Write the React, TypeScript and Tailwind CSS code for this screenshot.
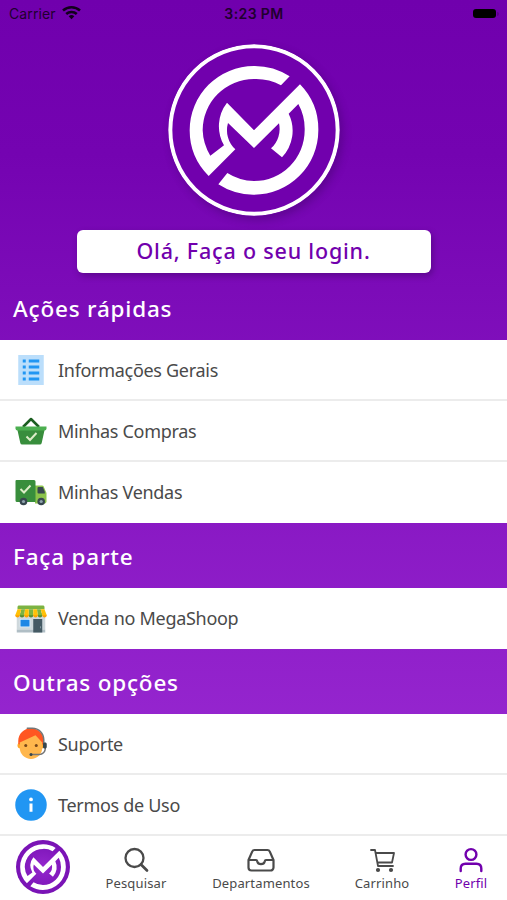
import type { ReactNode } from 'react';
import { FcAssistant, FcInfo, FcShop, FcViewDetails } from 'react-icons/fc';

const LOGO_PATH =
  'M404 124A193 193 0 0 0 297 93A193 193 0 0 0 104 286A193 193 0 0 0 161 423L241 343A78 78 0 0 1 219 264L297 339L372 265A78 78 0 0 1 348 340L381 367A116 116 0 0 0 401 236L430 207A154 154 0 0 1 449 286A152 152 0 0 1 297 438A154 154 0 0 1 217 414L190 448A193 193 0 0 0 297 479A193 193 0 0 0 490 286A193 193 0 0 0 435 148L297 286L216 203A115 115 0 0 0 207 331L166 362A154 154 0 0 1 143 286A154 154 0 0 1 297 132A154 154 0 0 1 378 151Z';

function Logo() {
  return (
    <svg className="w-[172px] h-[172px] rounded-full shadow-[3px_4px_8px_rgba(40,0,70,0.3)]" viewBox="39 27 516 516">
      <circle cx="297" cy="285" r="251" fill="#7100ad" stroke="#fff" strokeWidth="12" />
      <path d={LOGO_PATH} fill="#fff" />
    </svg>
  );
}

function TabLogo() {
  return (
    <svg className="w-[54px] h-[54px]" viewBox="69 57 456 456">
      <defs>
        <radialGradient id="tab-logo">
          <stop offset="0" stopColor="#9527ce" />
          <stop offset="1" stopColor="#7812b4" />
        </radialGradient>
      </defs>
      <circle cx="297" cy="285" r="228" fill="url(#tab-logo)" />
      <path d={LOGO_PATH} fill="#fff" />
    </svg>
  );
}

function BasketIcon() {
  return (
    <svg className="w-8 h-8" viewBox="0 0 32 32">
      <path d="M8 12 16 4l8 8" fill="none" stroke="#1b5e20" strokeWidth="2.5" strokeLinejoin="round" />
      <path d="M2 13h28l-3.3 15a2 2 0 0 1-2 1.6H7.3a2 2 0 0 1-2-1.6Z" fill="#388e3c" />
      <path d="M.5 11.500h31v2a2 2 0 0 1-2 2h-27a2 2 0 0 1-2-2Z" fill="#4caf50" />
      <path d="m11.5 21.5 3.5 3.5 6.5-7" fill="none" stroke="#dcedc8" strokeWidth="2" />
    </svg>
  );
}

function TruckIcon() {
  return (
    <svg className="w-8 h-8" viewBox="0 0 32 32">
      <path d="M20 8.500h7a2 2 0 0 1 1.800 1.200L31.500 16v8.500a2 2 0 0 1-2 2H20Z" fill="#8bc34a" />
      <path d="M1.500 3H19a1.500 1.500 0 0 1 1.500 1.500V25H2A1.500 1.500 0 0 1 .5 23.500V4a1 1 0 0 1 1-1Z" fill="#388e3c" />
      <path d="M23.500 10h4.300l2 4.700v1.800h-6.300a1 1 0 0 1-1-1V11a1 1 0 0 1 1-1Z" fill="#37474f" />
      <path d="m5.500 12 3.500 3.500L15.500 8.500" fill="none" stroke="#dcedc8" strokeWidth="2" />
      <circle cx="8.500" cy="24.500" r="3.800" fill="#37474f" />
      <circle cx="26.200" cy="24.500" r="3.800" fill="#37474f" />
      <circle cx="8.500" cy="24.500" r="1.600" fill="#90a4ae" />
      <circle cx="26.200" cy="24.500" r="1.600" fill="#90a4ae" />
    </svg>
  );
}

function StatusBar() {
  return (
    <div className="grid grid-cols-3 items-center h-7 pb-px pl-[9px] pr-2 font-['Inter',sans-serif] text-[14px] text-[#20002f]">
      <div className="flex items-center gap-1.5">
        <span className="tracking-[0.1px]">Carrier</span>
        <svg className="w-[19px] h-[15px] -mt-0.5" viewBox="0 0 19 15" fill="none" stroke="#12001c" strokeWidth="2.500">
          <path d="M1 5.500a12.500 12.500 0 0 1 17 0" />
          <path d="M4.200 9a7.700 7.700 0 0 1 10.600 0" />
          <path d="M6.700 11.300a4 4 0 0 1 5.600 0L9.500 14.200Z" fill="#12001c" stroke="none" />
        </svg>
      </div>
      <span className="text-center font-semibold tracking-[0.4px]">3:23 PM</span>
      <div className="flex justify-end items-center gap-px">
        <span className="w-[23px] h-[9px] rounded-[3px] bg-black" />
        <span className="w-0.5 h-1 rounded-r bg-[#5b008c]" />
      </div>
    </div>
  );
}

function SectionTitle({ children }: { children: ReactNode }) {
  return (
    <h2 className="flex items-center h-[65px] px-[13px] pt-0.5 text-[22.500px] font-medium text-white">
      <span className="tracking-[0.8px]">{children}</span>
    </h2>
  );
}

interface RowProps {
  icon: ReactNode;
  children: ReactNode;
  last?: boolean;
}

function Row({ icon, children, last }: RowProps) {
  return (
    <div className={`flex items-center h-[61px] pl-[15px] gap-[11px] bg-white text-[18px] text-[#4a4a4a] ${last ? '' : 'border-b-2 border-[#ececec] pt-px'}`}>
      <span className="flex items-center justify-center w-8 h-8 shrink-0">{icon}</span>
      <span className="tracking-[-0.3px]">{children}</span>
    </div>
  );
}

function Tab({ icon, children, active }: { icon: ReactNode; children: ReactNode; active?: boolean }) {
  return (
    <div className={`flex flex-col items-center gap-px text-[13px] leading-4 ${active ? 'text-[#7100ad]' : 'text-[#4a4a4a]'}`}>
      <span className="flex items-center justify-center h-7">{icon}</span>
      <span className="tracking-[0.15px]">{children}</span>
    </div>
  );
}

export default function App() {
  return (
    <div className="flex flex-col w-[507px] h-[900px] overflow-hidden bg-[linear-gradient(180deg,#7000ad_0%,#7403b1_17%,#9929d2_88%)] font-['Noto_Sans',sans-serif]">
      <StatusBar />

      <header className="flex flex-col items-center pt-4">
        <Logo />
        <button className="w-[354px] h-[43px] mt-3.5 rounded-md bg-white shadow-[2px_3px_6px_rgba(40,0,70,0.35)] text-[21.500px] leading-[41px] font-medium text-[#7100ad] pb-0.5">
          <span className="tracking-[0.8px]">Olá, Faça o seu login.</span>
        </button>
      </header>

      <div className="mt-0.5">
        <SectionTitle>Ações rápidas</SectionTitle>
      </div>
      <Row icon={<FcViewDetails className="w-9 h-9 shrink-0" />}>Informações Gerais</Row>
      <Row icon={<BasketIcon />}>Minhas Compras</Row>
      <Row icon={<TruckIcon />} last>Minhas Vendas</Row>

      <SectionTitle>Faça parte</SectionTitle>
      <Row icon={<FcShop className="w-9 h-9 shrink-0" />} last>Venda no MegaShoop</Row>

      <SectionTitle>Outras opções</SectionTitle>
      <Row icon={<FcAssistant className="w-9 h-9 shrink-0" />}>Suporte</Row>
      <Row icon={<FcInfo className="w-9 h-9 shrink-0" />}>Termos de Uso</Row>

      <nav className="flex flex-1 items-start bg-white">
        <div className="w-[86px] flex justify-center pt-1">
          <TabLogo />
        </div>
        <div className="w-[100px] pt-2.5">
          <Tab
            icon={
              <svg className="w-7 h-7" viewBox="0 0 28 28" fill="none" stroke="currentColor" strokeWidth="2.300" strokeLinecap="round">
                <circle cx="12.500" cy="12" r="9" />
                <path d="m19 18.500 6 6" strokeWidth="2.700" />
              </svg>
            }
          >
            Pesquisar
          </Tab>
        </div>
        <div className="w-[150px] pt-2.5">
          <Tab
            icon={
              <svg className="w-7 h-7" viewBox="0 0 28 28" fill="none" stroke="currentColor" strokeWidth="2.200" strokeLinejoin="round">
                <path d="M1.500 14 5.200 5.600Q5.900 4 7.500 4h13q1.600 0 2.300 1.600L26.500 14v7.500a3 3 0 0 1-3 3h-19a3 3 0 0 1-3-3Z" />
                <path d="M1.500 14H9q1 0 1.200 1.200.7 3 3.800 3t3.800-3Q18 14 19 14h7.500" />
              </svg>
            }
          >
            Departamentos
          </Tab>
        </div>
        <div className="w-[92px] pt-2.5">
          <Tab
            icon={
              <svg className="w-7 h-7" viewBox="0 0 28 28" fill="none" stroke="currentColor" strokeWidth="1.800" strokeLinecap="round" strokeLinejoin="round">
                <path d="M3 4h4l3 16h15M7.700 7H26l-2 9.500H9.400" />
                <circle cx="10" cy="24" r="1.200" fill="currentColor" />
                <circle cx="23" cy="24" r="1.200" fill="currentColor" />
              </svg>
            }
          >
            Carrinho
          </Tab>
        </div>
        <div className="flex-1 pt-2.5 pl-[7px]">
          <Tab
            active
            icon={
              <svg className="w-7 h-7" viewBox="0 0 28 28" fill="none" stroke="currentColor" strokeWidth="2.400" strokeLinecap="round">
                <circle cx="14" cy="8.500" r="5.400" />
                <path d="M3.700 25v-2.500q0-4.800 4.800-4.800h11q4.800 0 4.800 4.800V25" />
              </svg>
            }
          >
            Perfil
          </Tab>
        </div>
      </nav>
    </div>
  );
}
